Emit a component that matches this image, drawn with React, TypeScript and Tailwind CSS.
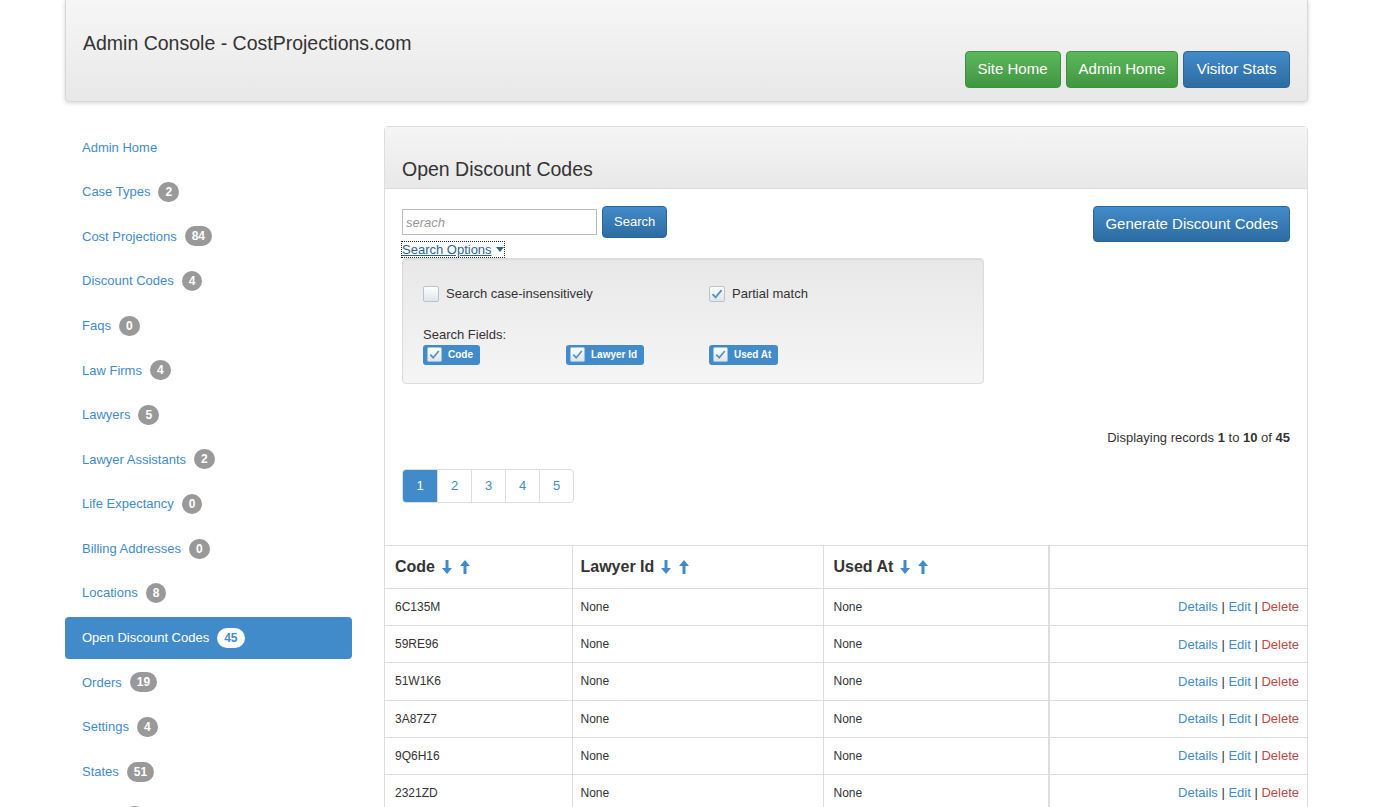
const font = { fontFamily: '"Liberation Sans", Arial, Helvetica, sans-serif' };

const navItems: { label: string; count?: number; active?: boolean }[] = [
  { label: "Admin Home" },
  { label: "Case Types", count: 2 },
  { label: "Cost Projections", count: 84 },
  { label: "Discount Codes", count: 4 },
  { label: "Faqs", count: 0 },
  { label: "Law Firms", count: 4 },
  { label: "Lawyers", count: 5 },
  { label: "Lawyer Assistants", count: 2 },
  { label: "Life Expectancy", count: 0 },
  { label: "Billing Addresses", count: 0 },
  { label: "Locations", count: 8 },
  { label: "Open Discount Codes", count: 45, active: true },
  { label: "Orders", count: 19 },
  { label: "Settings", count: 4 },
  { label: "States", count: 51 },
  { label: "Users", count: 3 },
];

const codes = ["6C135M", "59RE96", "51W1K6", "3A87Z7", "9Q6H16", "2321ZD", "7KD4P2", "B81Q3X", "4H2M9T", "Z6W0R5"];

function Check({ checked, small }: { checked?: boolean; small?: boolean }) {
  const s = small ? 15 : 16;
  return (
    <svg width={s} height={s} viewBox="0 0 16 16" className="shrink-0">
      <defs>
        <linearGradient id={small ? "cbs" : "cb"} x1="0" y1="0" x2="0" y2="1">
          <stop offset="0" stopColor="#ffffff" />
          <stop offset="1" stopColor="#dde4ec" />
        </linearGradient>
      </defs>
      <rect x="0.5" y="0.5" width="15" height="15" rx="1.5" fill={`url(#${small ? "cbs" : "cb"})`} stroke={small ? "#9fc2e3" : "#b9c3cd"} />
      {checked && <path d="M3.5 8.2 L6.6 11.4 L12.6 4.2" fill="none" stroke="#5b8fc4" strokeWidth="1.8" />}
    </svg>
  );
}

function Arrow({ up }: { up?: boolean }) {
  return (
    <svg width="12" height="16" viewBox="0 0 12 16" className="inline-block">
      {up ? (
        <path d="M6 1 L11 7 L7.5 7 L7.5 15 L4.5 15 L4.5 7 L1 7 Z" fill="#428bca" />
      ) : (
        <path d="M6 15 L11 9 L7.5 9 L7.5 1 L4.5 1 L4.5 9 L1 9 Z" fill="#428bca" />
      )}
    </svg>
  );
}

function FieldChip({ label }: { label: string }) {
  return (
    <span className="inline-flex items-center gap-[6px] h-[20px] pl-[4px] pr-[7px] rounded-[3px] bg-[#428bca] text-white text-[10px] font-bold">
      <Check checked small />
      {label}
    </span>
  );
}

export default function App() {
  return (
    <div style={font} className="min-h-screen bg-white text-[#333] text-[13px]">
      <div className="w-[1243px] ml-[65px]">
        {/* header */}
        <div className="h-[102px] flex justify-between rounded-b-[4px] border border-t-0 border-[#d8d8d8] bg-gradient-to-b from-[#f6f6f6] to-[#e8e8e8] shadow-[0_1px_4px_rgba(0,0,0,0.18)] px-[17px]">
          <div className="pt-[32px] text-[19.5px] leading-[22px] text-[#333]">Admin Console - CostProjections.com</div>
          <div className="self-end pb-[13px] flex gap-[5px]">
            <button className="h-[37px] px-[12px] rounded-[4px] border border-[#3e8f3e] bg-gradient-to-b from-[#5cb85c] to-[#419641] text-white text-[15px]">Site Home</button>
            <button className="h-[37px] px-[12px] rounded-[4px] border border-[#3e8f3e] bg-gradient-to-b from-[#5cb85c] to-[#419641] text-white text-[15px]">Admin Home</button>
            <button className="h-[37px] px-[12.5px] rounded-[4px] border border-[#2b669a] bg-gradient-to-b from-[#428bca] to-[#2d6ca2] text-white text-[15px]">Visitor Stats</button>
          </div>
        </div>

        <div className="flex gap-[32px] mt-[24px]">
          {/* sidebar */}
          <div className="w-[287px] shrink-0 flex flex-col gap-[2px]">
            {navItems.map((n) => (
              <div
                key={n.label}
                className={`h-[42.6px] flex items-center gap-[8px] px-[17px] rounded-[4px] ${n.active ? "bg-[#428bca] text-white" : "text-[#428bca]"}`}
              >
                <span>{n.label}</span>
                {n.count !== undefined && (
                  <span
                    className={`h-[20px] min-w-[20px] px-[7px] rounded-full flex items-center justify-center text-[12px] font-bold ${n.active ? "bg-white text-[#428bca]" : "bg-[#999] text-white"}`}
                  >
                    {n.count}
                  </span>
                )}
              </div>
            ))}
          </div>

          {/* main panel */}
          <div className="flex-1 border border-[#ddd] rounded-t-[4px] self-start">
            <div className="h-[62px] flex items-end pb-[8px] px-[17px] border-b border-[#ddd] bg-gradient-to-b from-[#f5f5f5] to-[#e8e8e8]">
              <h2 className="text-[19.5px] leading-[22px] text-[#333]">Open Discount Codes</h2>
            </div>

            <div className="px-[17px] pt-[17px]">
              <div className="flex justify-between items-start">
                <div>
                  <div className="flex items-center gap-[5px]">
                    <input
                      placeholder="serach"
                      className="w-[195px] h-[26px] border border-[#bbb] px-[3px] text-[13px] italic placeholder:text-[#999] outline-none"
                    />
                    <button className="h-[32px] px-[11px] rounded-[4px] border border-[#2b669a] bg-gradient-to-b from-[#428bca] to-[#2d6ca2] text-white text-[13px]">Search</button>
                  </div>
                  <div className="mt-[4px] w-fit flex items-center gap-[4px] outline-1 outline-dotted outline-[#224] text-[#2a6496] underline text-[13px] leading-[15px]">
                    Search Options
                    <svg width="8" height="5" viewBox="0 0 8 5"><path d="M0 0 L8 0 L4 5 Z" fill="#2a6496" /></svg>
                  </div>
                </div>
                <button className="h-[36px] px-[11px] rounded-[4px] border border-[#2b669a] bg-gradient-to-b from-[#428bca] to-[#2d6ca2] text-white text-[15px]">Generate Discount Codes</button>
              </div>

              <div className="w-[582px] h-[126px] mt-[1px] rounded-[4px] border border-[#dcdcdc] bg-gradient-to-b from-[#e8e8e8] to-[#f5f5f5] shadow-[inset_0_1px_2px_rgba(0,0,0,0.06)] px-[20px] pt-[25px]">
                <div className="flex">
                  <label className="w-[286px] flex items-center gap-[7px] text-[13px]">
                    <Check />
                    Search case-insensitively
                  </label>
                  <label className="flex items-center gap-[7px] text-[13px]">
                    <Check checked />
                    Partial match
                  </label>
                </div>
                <div className="mt-[23px] text-[13px] leading-[16px]">Search Fields:</div>
                <div className="flex mt-[2px]">
                  <div className="w-[143px]"><FieldChip label="Code" /></div>
                  <div className="w-[143px]"><FieldChip label="Lawyer Id" /></div>
                  <div><FieldChip label="Used At" /></div>
                </div>
              </div>

              <div className="mt-[47px] text-right text-[13px] leading-[14px]">
                Displaying records <b>1</b> to <b>10</b> of <b>45</b>
              </div>

              <div className="mt-[24px] inline-flex h-[34px] border border-[#ddd] rounded-[4px] overflow-hidden text-[13px]">
                {[1, 2, 3, 4, 5].map((p) => (
                  <span
                    key={p}
                    className={`w-[34px] flex items-center justify-center ${p > 1 ? "border-l border-[#ddd] text-[#428bca]" : "bg-[#428bca] text-white"}`}
                  >
                    {p}
                  </span>
                ))}
              </div>
            </div>

            <table className="mt-[42px] w-full border-collapse table-fixed">
              <colgroup>
                <col className="w-[187px]" />
                <col className="w-[251px]" />
                <col className="w-[226px]" />
                <col />
              </colgroup>
              <thead>
                <tr className="h-[43px] border-t border-[#ddd]">
                  <th className="text-left font-bold text-[16px] px-[10px]">
                    <span className="inline-flex items-center gap-[6px]">Code <Arrow /> <Arrow up /></span>
                  </th>
                  <th className="text-left font-bold text-[16px] px-[8px] border-l border-[#ddd]">
                    <span className="inline-flex items-center gap-[6px]">Lawyer Id <Arrow /> <Arrow up /></span>
                  </th>
                  <th className="text-left font-bold text-[16px] px-[10px] border-l border-[#ddd]">
                    <span className="inline-flex items-center gap-[6px]">Used At <Arrow /> <Arrow up /></span>
                  </th>
                  <th className="border-l-2 border-[#ddd]"></th>
                </tr>
              </thead>
              <tbody className="text-[12px]">
                {codes.map((c) => (
                  <tr key={c} className="h-[37.2px] border-t border-[#ddd]">
                    <td className="px-[10px]">{c}</td>
                    <td className="px-[8px] border-l border-[#ddd]">None</td>
                    <td className="px-[10px] border-l border-[#ddd]">None</td>
                    <td className="pr-[8px] text-right border-l-2 border-[#ddd] text-[13px]">
                      <span className="text-[#428bca]">Details</span> | <span className="text-[#428bca]">Edit</span> | <span className="text-[#b94a48]">Delete</span>
                    </td>
                  </tr>
                ))}
              </tbody>
            </table>
          </div>
        </div>
      </div>
    </div>
  );
}
